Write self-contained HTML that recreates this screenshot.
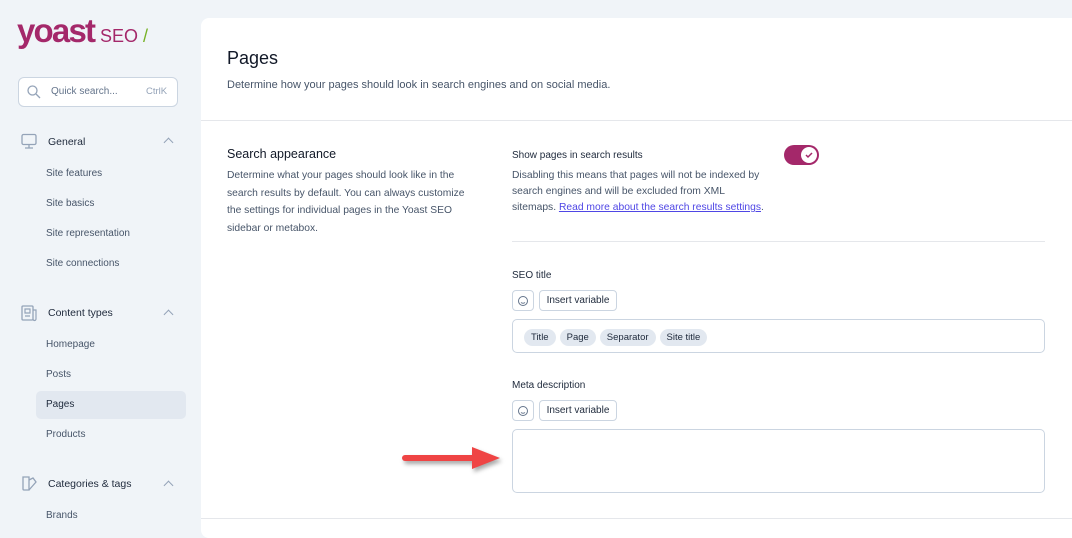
<!DOCTYPE html>
<html><head><style>
*{box-sizing:border-box;margin:0;padding:0}
body{width:1072px;height:522px;overflow:hidden;background:#f0f4f8;font-family:"Liberation Sans",sans-serif;position:relative;color:#1e293b}
.a{position:absolute}
.nav{font-size:10.5px;color:#1e293b}
.sub{font-size:10px;color:#475569;position:absolute;left:46px}
.card{left:201px;top:18px;width:880px;height:520px;background:#fff;border-radius:8px}
.p{font-size:10px;color:#475569;line-height:17px;white-space:nowrap}
.btn{border:1px solid #cbd5e1;border-radius:4px;height:21px;background:#fff;font-size:9.5px;color:#1e293b;display:flex;align-items:center;justify-content:center}
.chip{background:#e2e8f0;border-radius:10px;height:17px;padding:0 7px;font-size:9.5px;display:inline-flex;align-items:center;margin-right:4px;color:#1e293b}
.chev{position:absolute;left:165px;width:7px;height:7px;border-left:1.3px solid #94a3b8;border-top:1.3px solid #94a3b8;transform:rotate(45deg)}
</style></head><body>
<div class="a" style="left:17px;top:12px;font-size:33px;font-weight:bold;color:#a4286a;letter-spacing:-1.8px">yoast</div>
<div class="a" style="left:100px;top:26px;font-size:18px;color:#a4286a">SEO<span style="color:#77b227"> /</span></div>
<div class="a" style="left:18px;top:77px;width:160px;height:30px;background:#fff;border:1px solid #cbd5e1;border-radius:6px"></div>
<svg class="a" style="left:26px;top:84px" width="16" height="16"><circle cx="6.5" cy="6.5" r="4.5" fill="none" stroke="#94a3b8" stroke-width="1.3"/><path d="M10 10l4 4" stroke="#94a3b8" stroke-width="1.3"/></svg>
<div class="a" style="left:51px;top:86px;font-size:10px;color:#64748b">Quick search...</div>
<div class="a" style="left:146px;top:86px;font-size:9.5px;color:#94a3b8">CtrlK</div>
<svg class="a" style="left:21px;top:133px" width="17" height="17"><rect x="1" y="1.5" width="14" height="10" rx="1.5" fill="none" stroke="#94a3b8" stroke-width="1.3"/><path d="M4 15h8M8 11.5v3.5" stroke="#94a3b8" stroke-width="1.3"/></svg>
<div class="a nav" style="left:48px;top:136px">General</div><div class="chev" style="top:139px"></div>
<div class="sub" style="top:168px">Site features</div>
<div class="sub" style="top:198px">Site basics</div>
<div class="sub" style="top:228px">Site representation</div>
<div class="sub" style="top:258px">Site connections</div>
<svg class="a" style="left:21px;top:305px" width="17" height="17"><rect x="1" y="1" width="11" height="14" rx="1" fill="none" stroke="#94a3b8" stroke-width="1.3"/><path d="M12 5h3v9a1.5 1.5 0 0 1-3 0M4 4h5v4H4zM4 11h5" fill="none" stroke="#94a3b8" stroke-width="1.2"/></svg>
<div class="a nav" style="left:48px;top:307px">Content types</div><div class="chev" style="top:311px"></div>
<div class="sub" style="top:339px">Homepage</div>
<div class="sub" style="top:369px">Posts</div>
<div class="a" style="left:36px;top:391px;width:150px;height:28px;background:#e2e8f0;border-radius:5px"></div>
<div class="sub" style="top:399px;color:#1e293b">Pages</div>
<div class="sub" style="top:429px">Products</div>
<svg class="a" style="left:21px;top:475px" width="17" height="17"><path d="M2 2h6v13H3a1 1 0 0 1-1-1z M8 5l4-2 3 4-7 8" fill="none" stroke="#94a3b8" stroke-width="1.3"/></svg>
<div class="a nav" style="left:48px;top:478px">Categories &amp; tags</div><div class="chev" style="top:482px"></div>
<div class="sub" style="top:510px">Brands</div>

<div class="a card"></div>
<div class="a" style="left:227px;top:48px;font-size:18px;color:#111827">Pages</div>
<div class="a p" style="left:227px;top:77px;font-size:11px">Determine how your pages should look in search engines and on social media.</div>
<div class="a" style="left:201px;top:120px;width:871px;height:1px;background:#e5e7eb"></div>
<div class="a" style="left:227px;top:147px;font-size:12.5px;color:#111827">Search appearance</div>
<div class="a p" style="left:227px;top:167px;font-size:10.3px;line-height:17.5px">Determine what your pages should look like in the<br>search results by default. You can always customize<br>the settings for individual pages in the Yoast SEO<br>sidebar or metabox.</div>
<div class="a" style="left:512px;top:150px;font-size:10px;color:#1e293b">Show pages in search results</div>
<div class="a" style="left:784px;top:145px;width:35px;height:20px;border-radius:10px;background:#a4286a"></div>
<div class="a" style="left:801px;top:147px;width:16px;height:16px;border-radius:50%;background:#fff"></div>
<svg class="a" style="left:804px;top:150px" width="10" height="10"><path d="M2 5l2 2 4-4" stroke="#a4286a" stroke-width="1.5" fill="none"/></svg>
<div class="a p" style="left:512px;top:168px;font-size:10.3px;line-height:16px">Disabling this means that pages will not be indexed by<br>search engines and will be excluded from XML<br>sitemaps. <span style="color:#4f46e5;text-decoration:underline">Read more about the search results settings</span>.</div>
<div class="a" style="left:512px;top:241px;width:533px;height:1px;background:#e5e7eb"></div>
<div class="a" style="left:512px;top:270px;font-size:10px">SEO title</div>
<div class="a btn" style="left:512px;top:290px;width:22px"><svg width="12" height="12"><circle cx="6" cy="6" r="4.5" fill="none" stroke="#64748b"/><path d="M4 7.5q2 1.5 4 0" stroke="#64748b" fill="none"/></svg></div>
<div class="a btn" style="left:539px;top:290px;width:78px;font-size:10px">Insert variable</div>
<div class="a" style="left:512px;top:319px;width:533px;height:34px;border:1px solid #cbd5e1;border-radius:5px;padding:7px 0 0 11px"><span class="chip">Title</span><span class="chip">Page</span><span class="chip">Separator</span><span class="chip">Site title</span></div>
<div class="a" style="left:512px;top:380px;font-size:10px">Meta description</div>
<div class="a btn" style="left:512px;top:400px;width:22px"><svg width="12" height="12"><circle cx="6" cy="6" r="4.5" fill="none" stroke="#64748b"/><path d="M4 7.5q2 1.5 4 0" stroke="#64748b" fill="none"/></svg></div>
<div class="a btn" style="left:539px;top:400px;width:78px;font-size:10px">Insert variable</div>
<div class="a" style="left:512px;top:429px;width:533px;height:64px;border:1px solid #cbd5e1;border-radius:5px"></div>
<svg class="a" style="left:398px;top:443px" width="110" height="35"><g fill="#ef4444" style="filter:drop-shadow(2px 3px 2px rgba(0,0,0,.35))"><rect x="4" y="12" width="74" height="6" rx="3"/><path d="M74 4l28 11-28 11z"/></g></svg>
<div class="a" style="left:201px;top:518px;width:871px;height:1px;background:#e5e7eb"></div>
</body></html>
